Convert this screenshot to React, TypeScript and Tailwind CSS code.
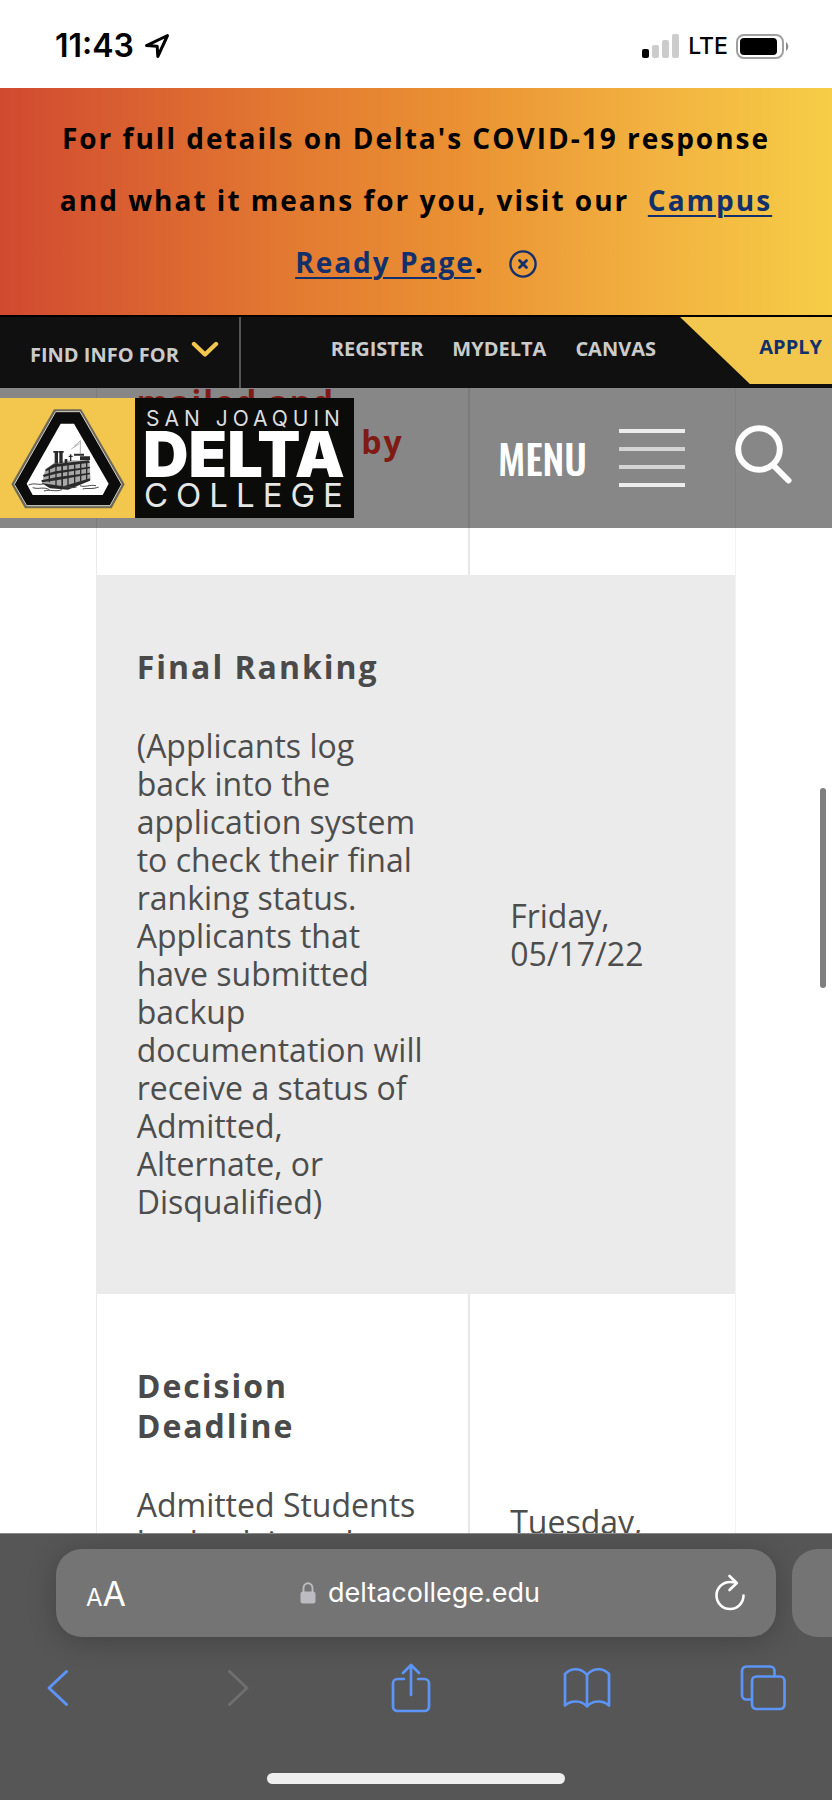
import React from "react";

const rows = [
  {
    title: "mailed and postmarked by",
    note: "",
    date: "",
    tone: "bg-white",
    titleTone: "text-[#f03326]",
    divider: "border-r-[#e8e8e8]",
  },
  {
    title: "Final Ranking",
    note: "(Applicants log back into the application system to check their final ranking status. Applicants that have submitted backup documentation will receive a status of Admitted, Alternate, or Disqualified)",
    date: "Friday, 05/17/22",
    tone: "bg-[#ebebeb]",
    titleTone: "text-[#4a4a4a]",
    divider: "border-r-[#ebebeb]",
  },
  {
    title: "Decision Deadline",
    note: "Admitted Students log back into the application system to accept or decline their seat by the deadline",
    date: "Tuesday, 05/24/22",
    tone: "bg-white",
    titleTone: "text-[#4a4a4a]",
    divider: "border-r-[#e8e8e8]",
  },
];

function StatusBar() {
  return (
    <div className="flex h-[88px] shrink-0 items-center justify-between bg-white pt-1 pr-[43px] pl-[55px] font-['Inter',sans-serif] text-black">
      <div className="flex items-center gap-2.5">
        <span className="text-[32px] leading-8 font-semibold">11:43</span>
        <svg width="26" height="26" viewBox="0 0 26 26" fill="none" stroke="#000" strokeWidth="3" strokeLinejoin="round" aria-hidden="true">
          <path d="M23.5 2.5 L2.5 12.6 L13.2 13.2 L13.8 23.5 Z" />
        </svg>
      </div>
      <div className="flex items-center gap-2">
        <svg width="38" height="24" viewBox="0 0 38 24" aria-hidden="true">
          <rect x="0" y="15" width="7" height="9" rx="2" fill="#000" />
          <rect x="10" y="11" width="7" height="13" rx="2" fill="#ccc" />
          <rect x="20" y="6" width="7" height="18" rx="2" fill="#ccc" />
          <rect x="30" y="0" width="7" height="24" rx="2" fill="#ccc" />
        </svg>
        <span className="text-[23px] font-medium">LTE</span>
        <svg width="53" height="25" viewBox="0 0 53 25" aria-hidden="true">
          <rect x="1" y="1" width="46" height="23" rx="7" fill="none" stroke="#a0a0a0" strokeWidth="2" />
          <rect x="4" y="4" width="37" height="17" rx="4" fill="#000" />
          <path d="M50 8 C53 10 53 15 50 17 Z" fill="#8a8a8a" />
        </svg>
      </div>
    </div>
  );
}

function Banner() {
  return (
    <div className="shrink-0 bg-[linear-gradient(90deg,#d14a30_0%,#e37a31_35%,#ea9133_55%,#f2b140_78%,#f6cd46_100%)] px-12 pt-[19px] pb-[22px] text-center text-[28px] leading-[62px] font-bold tracking-[2px] text-black">
      For full details on Delta's COVID-19 response and what it means for you, visit our&nbsp;{" "}
      <a href="#campus-ready" className="text-[#12306b] underline decoration-2 underline-offset-4">
        Campus Ready Page
      </a>
      .
      <button type="button" aria-label="Dismiss" className="mb-1 ml-6 inline-block align-middle">
        <svg width="28" height="28" viewBox="0 0 28 28" fill="none" stroke="#12306b" strokeWidth="2.4" strokeLinecap="round">
          <circle cx="14" cy="14" r="12.6" />
          <path d="M10.5 10.5 L17.5 17.5 M17.5 10.5 L10.5 17.5" strokeWidth="2.8" />
        </svg>
      </button>
    </div>
  );
}

function TopNav() {
  return (
    <nav className="flex h-[73px] shrink-0 items-stretch border-t-2 border-black bg-[#101010] text-xl font-bold text-[#cbcbcb]">
      <button type="button" className="flex w-[241px] items-center gap-3 border-r-2 border-[#555] pt-1 pl-[30px]">
        <span className="whitespace-nowrap">FIND INFO FOR</span>
        <svg className="mb-2.5" width="28" height="17" viewBox="0 0 28 17" fill="none" stroke="#f3c74d" strokeWidth="4.4" strokeLinecap="round" strokeLinejoin="round" aria-hidden="true">
          <path d="M3 3 L14 13.5 L25 3" />
        </svg>
      </button>
      <div className="flex flex-1 items-center justify-end gap-[29px] pr-6 pb-2">
        <a href="#register">REGISTER</a>
        <a href="#mydelta">MYDELTA</a>
        <a href="#canvas">CANVAS</a>
      </div>
      <a
        href="#apply"
        className="mb-1 flex w-[152px] items-center justify-end bg-[#f3c74d] pr-2.5 pb-2 text-[#12306b] [clip-path:polygon(0_0,100%_0,100%_100%,46%_100%)]"
      >
        APPLY
      </a>
    </nav>
  );
}

function Logo() {
  return (
    <a href="#home" aria-label="San Joaquin Delta College" className="flex h-30 shrink-0">
      <svg className="h-full w-[135px] bg-[#f3c74d]" viewBox="0 293 405 360" aria-hidden="true">
        <path d="M164 330 H242 L370 552 L333 620 H77 L38 552 Z" fill="#0c0c0c" stroke="#6f6a58" strokeWidth="7" />
        <path d="M167 334 H240 L365 552 L330 616 H80 L43 552 Z" fill="none" stroke="#d9d6cb" strokeWidth="3" />
        <path d="M182 370 H222 L326 550 L308 584 H98 L80 550 Z" fill="#fff" />
        <path d="M136 506 L162 488 L214 480 L268 482 L272 540 L226 556 L190 562 L126 548 Z" fill="#a8a8a8" />
        <g fill="#2a2a2a">
          <path d="M164 454 h10 v36 h-10z M178 454 h10 v34 h-10z M160 452 h16 v5 h-16z M177 452 h14 v5 h-14z" />
          <path d="M194 476 h8 v12 h-8z M206 466 h12 v4 h-12z M210 462 h4 v20 h-4z M222 460 h30 v6 h-30z M240 468 h30 v12 h-30z" />
          <path d="M136 508 L160 492 L266 480 L270 487 L166 500 L138 513z" />
          <path d="M128 524 L166 513 L270 499 V504 L168 520 L132 530z" />
          <path d="M124 540 L168 531 L270 517 V522 L170 540 L126 546z" />
          <path d="M124 548 L190 558 L270 534 V541 L204 568 L150 564z" />
          <path d="M166 496 h4 v60 h-4z M184 494 h5 v64 h-5z M202 490 h4 v64 h-4z M222 488 h4 v60 h-4z M240 486 h4 v56 h-4z M258 484 h4 v54 h-4z M146 504 h4 v42 h-4z" />
        </g>
        <g fill="none" stroke="#444" strokeWidth="3">
          <path d="M241 420 V462 M241 422 L222 438 M214 446 L238 430" stroke="#888" strokeWidth="2" />
          <path d="M86 554 C104 546 116 556 132 550 M98 562 C118 568 130 558 148 568 M132 572 C152 566 164 576 186 568 M190 560 C206 556 212 566 230 560 M240 556 C256 562 270 552 288 556 M248 566 C262 562 276 568 296 560" />
        </g>
      </svg>
      <svg className="h-full w-[219px] bg-[#0b0b0a]" viewBox="0 0 219 120" fill="#fff" aria-hidden="true">
        <g fontFamily="Inter, sans-serif">
          <text x="11" y="28" fontSize="21" fill="#ddd" letterSpacing="5">SAN JOAQUIN</text>
          <text x="8" y="79" fontSize="63" fontWeight="900">DELTA</text>
          <text x="9" y="109" fontSize="33" fill="#e6e6e6" letterSpacing="8">COLLEGE</text>
        </g>
      </svg>
    </a>
  );
}

function SiteHeader() {
  return (
    <header className="absolute inset-x-0 top-0 z-10 flex h-[140px] items-center bg-black/47">
      <Logo />
      <button type="button" className="ml-auto flex items-center gap-8 text-white">
        <span className="font-['Oswald','Open_Sans_Condensed','Noto_Sans_Condensed','Roboto_Condensed','Roboto',sans-serif] text-[40px] leading-[48px] font-medium">MENU</span>
        <span className="flex flex-col gap-[14px]" aria-hidden="true">
          <span className="h-1 w-[66px] bg-[#ececec]" />
          <span className="h-1 w-[66px] bg-[#d4d4d4]" />
          <span className="h-1 w-[66px] bg-[#d4d4d4]" />
          <span className="h-1 w-[66px] bg-[#ececec]" />
        </span>
      </button>
      <button type="button" aria-label="Search" className="mr-10 mb-2 ml-[50px]">
        <svg width="57" height="60" viewBox="0 0 57 60" fill="none" stroke="#fff" strokeWidth="6" strokeLinecap="round">
          <circle cx="24" cy="25" r="20.8" />
          <path d="M39 42 L53.5 56.5" />
        </svg>
      </button>
    </header>
  );
}

function Timeline() {
  return (
    <table className="mx-auto -mt-[78px] w-[77%] table-fixed border-collapse text-left text-[#4d4d4d]">
      <tbody>
        {rows.map((row) => (
          <tr key={row.title} className={row.tone}>
            <td className={`w-[373px] border-r-2 border-l border-l-[#ebebeb] px-10 pt-[72px] pb-[73px] align-middle ${row.divider}`}>
              <h4 className={`mb-10 text-[32px] leading-10 font-bold tracking-[2px] ${row.titleTone}`}>{row.title}</h4>
              {row.note && <p className="text-[32px] leading-[38px]">{row.note}</p>}
            </td>
            <td className="border-r border-[#f2f2f2] px-10 align-middle text-[32px] leading-[38px]">{row.date}</td>
          </tr>
        ))}
      </tbody>
    </table>
  );
}

const tool = "flex w-12 justify-center";

function BrowserBar() {
  return (
    <footer className="flex h-[267px] shrink-0 flex-col overflow-hidden border-t border-[#8a8a8a] bg-[#565656] pt-[15px]">
      <div className="flex gap-4 pl-14 font-['Inter',sans-serif] text-white">
        <div className="flex h-22 flex-1 items-center justify-between rounded-[26px] bg-[#747474] pr-[30px] pl-[30px] shadow-[0_4px_28px_rgba(0,0,0,0.22)]">
          <button type="button" aria-label="Page settings" className="flex items-baseline">
            <span className="text-2xl">A</span>
            <span className="text-[34px]">A</span>
          </button>
          <div className="flex items-center gap-3">
            <svg width="16" height="22" viewBox="0 0 16 22" aria-hidden="true">
              <rect x="0.5" y="9.5" width="15" height="12" rx="2.5" fill="#bcbbc1" />
              <path d="M3.5 10 V6 a4.5 4.8 0 0 1 9 0 V10" fill="none" stroke="#bcbbc1" strokeWidth="1.9" />
            </svg>
            <span className="text-[27px]">deltacollege.edu</span>
          </div>
          <button type="button" aria-label="Reload">
            <svg width="32" height="38" viewBox="0 0 32 38" fill="none" stroke="#fff" strokeWidth="2.6" strokeLinecap="round" strokeLinejoin="round">
              <path d="M29.5 21.5 A13.5 13.5 0 1 1 16 8 C18.5 8 20.5 8.3 22 8.8" />
              <path d="M15.5 2 L22.8 9 L15.5 16" />
            </svg>
          </button>
        </div>
        <div className="h-22 w-10 rounded-l-[26px] bg-[#747474]" />
      </div>
      <div className="mt-[26px] flex h-[50px] items-center justify-between pr-[45px] pl-[34px] text-[#5d94f8]">
        <button type="button" aria-label="Back" className={tool}>
          <svg width="24" height="38" viewBox="0 0 24 38" fill="none" stroke="currentColor" strokeWidth="3" strokeLinecap="round" strokeLinejoin="round">
            <path d="M20.5 2.5 L3 19 L20.5 35.5" />
          </svg>
        </button>
        <button type="button" aria-label="Forward" className="flex w-12 justify-center pl-2 text-[#6f6f6f]">
          <svg width="24" height="38" viewBox="0 0 24 38" fill="none" stroke="currentColor" strokeWidth="3" strokeLinecap="round" strokeLinejoin="round">
            <path d="M3.5 2.5 L21 19 L3.5 35.5" />
          </svg>
        </button>
        <button type="button" aria-label="Share" className={tool}>
          <svg width="40" height="50" viewBox="0 0 40 50" fill="none" stroke="currentColor" strokeWidth="2.7" strokeLinecap="round" strokeLinejoin="round">
            <path d="M13 16 H6.5 A4.5 4.5 0 0 0 2 20.5 V43.5 A4.5 4.5 0 0 0 6.5 48 H33.5 A4.5 4.5 0 0 0 38 43.5 V20.5 A4.5 4.5 0 0 0 33.5 16 H27" />
            <path d="M20 32 V2.5 M12 10 L20 2 L28 10" />
          </svg>
        </button>
        <button type="button" aria-label="Bookmarks" className={tool}>
          <svg width="48" height="42" viewBox="0 0 48 42" fill="none" stroke="currentColor" strokeWidth="2.7" strokeLinecap="round" strokeLinejoin="round">
            <path d="M24 8 C18.5 0.5 8 0.5 2 7 V38.5 C8 33 18.5 33 24 39.5 C29.5 33 40 33 46 38.5 V7 C40 0.5 29.5 0.5 24 8 Z M24 8 V39" />
          </svg>
        </button>
        <button type="button" aria-label="Tabs" className={tool}>
          <svg width="46" height="46" viewBox="0 0 46 46" fill="none" stroke="currentColor" strokeWidth="2.7" strokeLinejoin="round">
            <path d="M11 34.5 H6.5 A4.5 4.5 0 0 1 2 30 V6 A4.5 4.5 0 0 1 6.5 1.5 H30 A4.5 4.5 0 0 1 34.5 6 V11" />
            <rect x="12" y="11.5" width="32.5" height="32.5" rx="4.5" />
          </svg>
        </button>
      </div>
      <div className="mx-auto mt-auto mb-4 h-[11px] w-[298px] rounded-full bg-[#efefef]" />
    </footer>
  );
}

export default function App() {
  return (
    <div className="flex h-screen flex-col overflow-hidden bg-white font-['Open_Sans',sans-serif]">
      <StatusBar />
      <Banner />
      <TopNav />
      <main className="relative flex-1 overflow-hidden">
        <SiteHeader />
        <Timeline />
        <div className="absolute top-[400px] right-1.5 h-[200px] w-1.5 rounded-full bg-[#7f7f7f]" />
      </main>
      <BrowserBar />
    </div>
  );
}
